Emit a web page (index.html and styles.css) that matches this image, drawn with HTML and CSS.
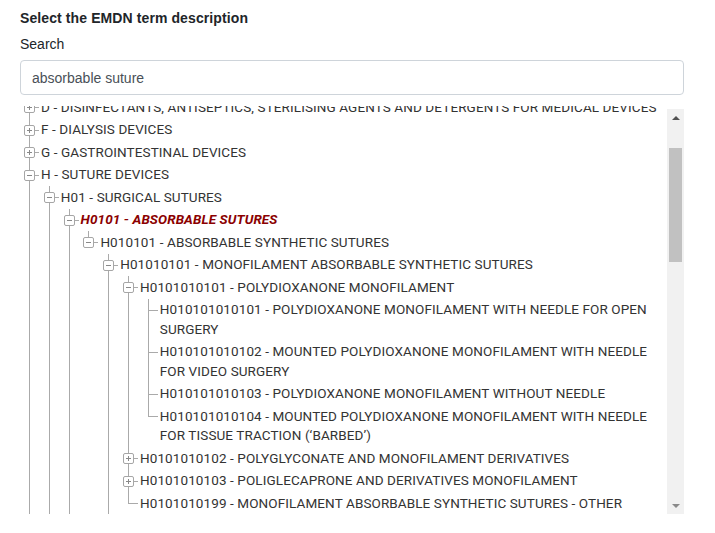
FILE: index.html
```html
<!DOCTYPE html>
<html lang="en">
<head>
<meta charset="utf-8">
<title>EMDN term</title>
<link rel="stylesheet" href="styles.css">
</head>
<body>
<div class="page">
  <div class="title">Select the EMDN term description</div>
  <label class="lbl" for="q">Search</label>
  <input id="q" class="search" type="text" value="absorbable suture">
  <div class="treebox">
    <div class="viewport">
      <ul class="tree root">
        <li><div class="row"><span class="tg plus"></span>D - DISINFECTANTS, ANTISEPTICS, STERILISING AGENTS AND DETERGENTS FOR MEDICAL DEVICES</div></li>
        <li><div class="row"><span class="tg plus"></span>F - DIALYSIS DEVICES</div></li>
        <li><div class="row"><span class="tg plus"></span>G - GASTROINTESTINAL DEVICES</div></li>
        <li><div class="row"><span class="tg minus"></span>H - SUTURE DEVICES</div>
          <ul class="tree">
            <li><div class="row"><span class="tg minus"></span>H01 - SURGICAL SUTURES</div>
              <ul class="tree">
                <li><div class="row sel"><span class="tg minus"></span>H0101 - ABSORBABLE SUTURES</div>
                  <ul class="tree">
                    <li><div class="row"><span class="tg minus"></span>H010101 - ABSORBABLE SYNTHETIC SUTURES</div>
                      <ul class="tree">
                        <li><div class="row"><span class="tg minus"></span>H01010101 - MONOFILAMENT ABSORBABLE SYNTHETIC SUTURES</div>
                          <ul class="tree">
                            <li><div class="row"><span class="tg minus"></span>H0101010101 - POLYDIOXANONE MONOFILAMENT</div>
                              <ul class="tree">
                                <li><div class="row">H010101010101 - POLYDIOXANONE MONOFILAMENT WITH NEEDLE FOR OPEN<br>SURGERY</div></li>
                                <li><div class="row">H010101010102 - MOUNTED POLYDIOXANONE MONOFILAMENT WITH NEEDLE<br>FOR VIDEO SURGERY</div></li>
                                <li><div class="row">H010101010103 - POLYDIOXANONE MONOFILAMENT WITHOUT NEEDLE</div></li>
                                <li><div class="row">H010101010104 - MOUNTED POLYDIOXANONE MONOFILAMENT WITH NEEDLE<br>FOR TISSUE TRACTION (‘BARBED’)</div></li>
                              </ul>
                            </li>
                            <li><div class="row"><span class="tg plus"></span>H0101010102 - POLYGLYCONATE AND MONOFILAMENT DERIVATIVES</div></li>
                            <li><div class="row"><span class="tg plus"></span>H0101010103 - POLIGLECAPRONE AND DERIVATIVES MONOFILAMENT</div></li>
                            <li><div class="row">H0101010199 - MONOFILAMENT ABSORBABLE SYNTHETIC SUTURES - OTHER</div></li>
                          </ul>
                        </li>
                        <li><div class="row"><span class="tg plus"></span>H01010102 - MULTIFILAMENT ABSORBABLE SYNTHETIC SUTURES</div></li>
                      </ul>
                    </li>
                  </ul>
                </li>
                <li><div class="row"><span class="tg plus"></span>H0102 - NON-ABSORBABLE SUTURES</div></li>
              </ul>
            </li>
            <li><div class="row"><span class="tg plus"></span>H02 - SUTURE DEVICES - ACCESSORIES</div></li>
          </ul>
        </li>
        <li><div class="row"><span class="tg plus"></span>J - ACTIVE-IMPLANTABLE DEVICES</div></li>
      </ul>
    </div>
    <div class="sb">
      <div class="sb-btn"><span class="arr up"></span></div>
      <div class="sb-track"><div class="sb-thumb"></div></div>
      <div class="sb-btn"><span class="arr down"></span></div>
    </div>
  </div>
</div>
</body>
</html>
```
FILE: styles.css
```css
html, body {
  margin: 0;
  padding: 0;
  background: #fff;
}
.page {
  padding: 10px 31px 0 20px;
  font-family: "Liberation Sans", Arial, sans-serif;
  color: #212529;
}
.title {
  font-weight: bold;
  font-size: 14px;
  letter-spacing: 0.1px;
  line-height: 16px;
}
.lbl {
  display: block;
  margin-top: 8px;
  font-size: 14px;
  line-height: 21px;
}
.search {
  display: block;
  box-sizing: border-box;
  width: 100%;
  height: 35px;
  margin: 5px 0 0;
  padding: 0 11px;
  border: 1px solid #ced4da;
  border-radius: 4px;
  font-family: "Liberation Sans", Arial, sans-serif;
  font-size: 14px;
  color: #495057;
  background: #fff;
  outline: none;
}
.treebox {
  display: flex;
  height: 408px;
  margin-top: 11px;
}
.viewport {
  flex: 1;
  overflow: hidden;
}
.tree {
  list-style: none;
  margin: 0;
  padding: 0 0 0 19.8px;
  font-family: Roboto, "Noto Sans", sans-serif;
  font-size: 13.5px;
  letter-spacing: 0.1px;
  color: #333;
}
.tree.root {
  padding-left: 0;
  margin-top: -10px;
}
.tree li {
  position: relative;
}
.tree li::before {
  content: "";
  position: absolute;
  left: 9px;
  top: 0;
  bottom: 0;
  border-left: 1px solid #aaa;
}
.tree li:last-child::before {
  bottom: auto;
  height: 11.5px;
}
.tree.root > li:last-child::before {
  bottom: 0;
  height: auto;
}
.row {
  position: relative;
  padding: 1.5px 0 1.5px 21px;
  line-height: 19.5px;
  white-space: nowrap;
}
.row::before {
  content: "";
  position: absolute;
  left: 9px;
  top: 11px;
  width: 10px;
  border-top: 1px solid #aaa;
}
.row.sel {
  color: #8b0000;
  font-weight: bold;
  font-style: italic;
}
.tg {
  position: absolute;
  left: 4px;
  top: 6px;
  width: 9px;
  height: 9px;
  border: 1px solid #a6a6a6;
  border-radius: 2px;
  background: #fff;
  z-index: 1;
}
.tg::before {
  content: "";
  position: absolute;
  left: 2px;
  top: 4px;
  width: 5px;
  height: 1px;
  background: #888;
}
.tg.plus::after {
  content: "";
  position: absolute;
  left: 4px;
  top: 2px;
  width: 1px;
  height: 5px;
  background: #888;
}
.sb {
  width: 17px;
  margin-top: 3px;
  background: #f1f1f1;
  display: flex;
  flex-direction: column;
}
.sb-btn {
  height: 17px;
  display: flex;
  align-items: center;
  justify-content: center;
}
.arr {
  width: 0;
  height: 0;
  border-left: 4px solid transparent;
  border-right: 4px solid transparent;
}
.arr.up {
  border-bottom: 4px solid #505050;
}
.arr.down {
  border-top: 4px solid #8a8a8a;
}
.sb-track {
  flex: 1;
  padding: 22px 2px 0;
}
.sb-thumb {
  height: 114px;
  background: #c1c1c1;
}
```
